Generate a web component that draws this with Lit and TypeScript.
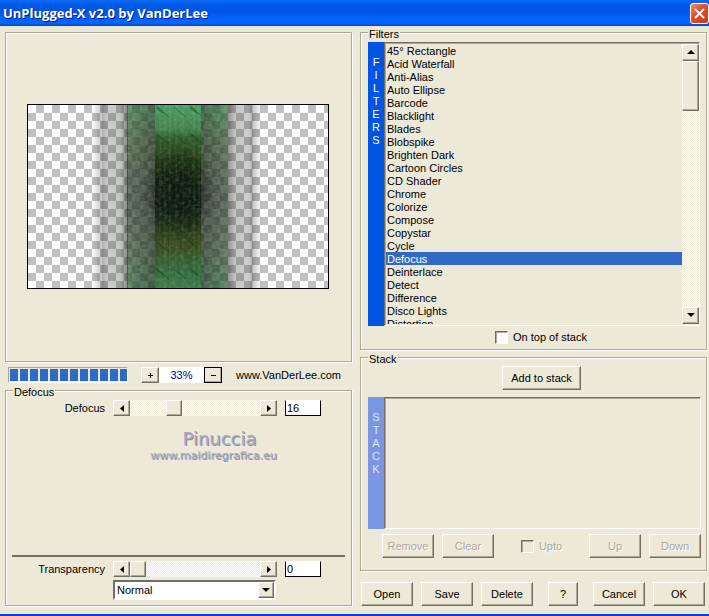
import { LitElement, html, svg, css } from "lit";
import { customElement, property, state } from "lit/decorators.js";
import { classMap } from "lit/directives/class-map.js";

const FILTERS = [
  "45° Rectangle", "Acid Waterfall", "Anti-Alias", "Auto Ellipse", "Barcode",
  "Blacklight", "Blades", "Blobspike", "Brighten Dark", "Cartoon Circles",
  "CD Shader", "Chrome", "Colorize", "Compose", "Copystar", "Cycle", "Defocus",
  "Deinterlace", "Detect", "Difference", "Disco Lights", "Distortion",
];

const controls = css`
  * { box-sizing: border-box; }
  button {
    font: inherit;
    color: #000;
    margin: 0;
    padding: 0;
    border: 1px solid;
    border-color: #fff #716f64 #716f64 #fff;
    border-radius: 0;
    background: #ece9d8;
    box-shadow: inset -1px -1px #aca899;
    display: flex;
    align-items: center;
    justify-content: center;
  }
  button:disabled { color: #aca899; text-shadow: 1px 1px #fff; }
  button svg { display: block; fill: #000; }
  .dither {
    background: repeating-conic-gradient(#fff 0 25%, #ece9d8 0 50%) 0 0 / 2px 2px;
  }
`;

const arrow = {
  left: svg`<path d="M6 1V8L2 4.5z"/>`,
  right: svg`<path d="M2 1V8L6 4.5z"/>`,
  up: svg`<path d="M0 6H8L4 2z"/>`,
  down: svg`<path d="M0 2H8L4 6z"/>`,
};
const icon = (name: keyof typeof arrow) =>
  html`<svg width="8" height="9" viewBox="0 0 8 9" aria-hidden="true">${arrow[name]}</svg>`;

@customElement("param-slider")
class ParamSlider extends LitElement {
  @property() label = "";
  @property({ type: Number }) value = 0;
  @property({ type: Number }) max = 100;

  static styles = [controls, css`
    :host {
      display: grid;
      grid-template-columns: 93px minmax(0, 1fr) 60px;
      column-gap: 8px;
      height: 16px;
      line-height: 16px;
    }
    label { text-align: right; }
    .bar { display: grid; grid-template-columns: 17px 1fr 17px; }
    .range {
      appearance: none;
      width: 100%;
      height: 16px;
      margin: 0;
    }
    .range::-webkit-slider-thumb {
      appearance: none;
      width: 16px;
      height: 16px;
      border: 1px solid;
      border-color: #fff #716f64 #716f64 #fff;
      background: #ece9d8;
      box-shadow: inset -1px -1px #aca899;
    }
    .number {
      width: 36px;
      height: 16px;
      padding: 0 1px;
      font: inherit;
      border: 1px solid #000;
      border-top-color: #fff;
      border-radius: 0;
      background: #fff;
    }
  `];

  private set(v: number) {
    this.value = Math.max(0, Math.min(this.max, v || 0));
  }

  render() {
    return html`
      <label for="range">${this.label}</label>
      <div class="bar">
        <button aria-label="Decrease" @click=${() => this.set(this.value - 1)}>${icon("left")}</button>
        <input id="range" class="range dither" type="range" min="0" max=${this.max}
          .value=${String(this.value)}
          @input=${(e: Event) => this.set(+(e.target as HTMLInputElement).value)}>
        <button aria-label="Increase" @click=${() => this.set(this.value + 1)}>${icon("right")}</button>
      </div>
      <input class="number" type="text" aria-label="${this.label} value" .value=${String(this.value)}
        @change=${(e: Event) => this.set(+(e.target as HTMLInputElement).value)}>
    `;
  }
}

@customElement("preview-image")
class PreviewImage extends LitElement {
  static styles = css`
    :host { display: block; border: 1px solid #000; }
    svg { display: block; width: 100%; height: auto; }
  `;

  render() {
    return html`
      <svg viewBox="0 0 300 183" role="img" aria-label="Filter preview">
        <defs>
          <pattern id="check" width="16" height="16" patternUnits="userSpaceOnUse">
            <path fill="#fff" d="M0 0H16V16H0z"/>
            <path fill="#c0c0c0" d="M8 0H16V8H8zM0 8H8V16H0z"/>
          </pattern>
          <linearGradient id="fadeL">
            <stop offset="0" stop-color="#000" stop-opacity="0"/>
            <stop offset="1" stop-color="#000" stop-opacity=".22"/>
          </linearGradient>
          <linearGradient id="strip">
            <stop offset="0" stop-color="#000" stop-opacity=".3"/>
            <stop offset=".25" stop-color="#50584e" stop-opacity=".3"/>
            <stop offset=".7" stop-color="#50584e" stop-opacity=".34"/>
            <stop offset="1" stop-color="#000" stop-opacity=".5"/>
          </linearGradient>
          <linearGradient id="stripR">
            <stop offset="0" stop-color="#000" stop-opacity=".42"/>
            <stop offset=".3" stop-color="#50584e" stop-opacity=".34"/>
            <stop offset=".8" stop-color="#50584e" stop-opacity=".28"/>
            <stop offset="1" stop-color="#000" stop-opacity=".32"/>
          </linearGradient>
          <linearGradient id="core" x2="0" y2="1">
            <stop offset="0" stop-color="#4c9c65"/>
            <stop offset=".13" stop-color="#408250"/>
            <stop offset=".19" stop-color="#2d562b"/>
            <stop offset=".28" stop-color="#28421b"/>
            <stop offset=".38" stop-color="#182a16"/>
            <stop offset=".56" stop-color="#0f1f16"/>
            <stop offset=".66" stop-color="#213418"/>
            <stop offset=".78" stop-color="#3a4c1e"/>
            <stop offset=".86" stop-color="#326038"/>
            <stop offset="1" stop-color="#387a4b"/>
          </linearGradient>
          <linearGradient id="side" x2="0" y2="1">
            <stop offset="0" stop-color="#22703a"/>
            <stop offset=".2" stop-color="#2c4a28"/>
            <stop offset=".5" stop-color="#223428"/>
            <stop offset=".8" stop-color="#304a30"/>
            <stop offset="1" stop-color="#1c5c34"/>
          </linearGradient>
          <linearGradient id="sideShade">
            <stop offset="0" stop-color="#000" stop-opacity=".02"/>
            <stop offset="1" stop-color="#000" stop-opacity=".28"/>
          </linearGradient>
          <radialGradient id="dark">
            <stop offset="0" stop-color="#06110c" stop-opacity=".8"/>
            <stop offset=".5" stop-color="#0a140c" stop-opacity=".5"/>
            <stop offset="1" stop-color="#0a140c" stop-opacity="0"/>
          </radialGradient>
          <filter id="grain" x="0" y="0" width="1" height="1">
            <feTurbulence type="fractalNoise" baseFrequency=".25 .3" numOctaves="2" seed="4"/>
            <feColorMatrix values="0 0 0 0 .5  0 0 0 0 .56  0 0 0 0 .24  1.6 0 0 0 -.66"/>
          </filter>
          <pattern id="teeth" width="34" height="27" patternUnits="userSpaceOnUse" patternTransform="translate(127 0)">
            <path d="M2 2L14 12M19 2L31 12" stroke="#10301c" stroke-opacity=".45"/>
            <path d="M0 0L6 4L10 10L2 5zM34 0L40 4z" fill="#10301c" fill-opacity=".3"/>
            <path d="M5 0V27M10 0V27M15 0V27M21 0V27M28 0V27" stroke="#bfe8c0" stroke-opacity=".08"/>
          </pattern>
        </defs>
        <rect width="300" height="183" fill="url(#check)"/>
        <rect x="64" width="10" height="183" fill="url(#fadeL)"/>
        <rect x="74" width="26" height="183" fill="url(#strip)"/>
        <rect x="200" width="25" height="183" fill="url(#stripR)"/>
        <rect x="-234" width="9" height="183" transform="scale(-1 1)" fill="url(#fadeL)"/>
        <rect x="99" width="101" height="183" fill="url(#side)" fill-opacity=".7"/>
        <rect x="99" width="28" height="183" fill="url(#sideShade)"/>
        <rect x="-200" width="27" height="183" transform="scale(-1 1)" fill="url(#sideShade)"/>
        <rect x="127" width="46" height="183" fill="url(#core)"/>
        <ellipse cx="151" cy="86" rx="36" ry="46" fill="url(#dark)"/>
        <rect x="99" width="101" height="183" filter="url(#grain)" opacity=".3"/>
        <rect x="127" width="46" height="183" fill="url(#teeth)"/>
        <g fill="none" stroke="#77813a" stroke-opacity=".3" stroke-dasharray="1 2">
          <ellipse cx="151" cy="88" rx="10" ry="12"/>
          <ellipse cx="151" cy="88" rx="16" ry="22"/>
          <ellipse cx="151" cy="88" rx="21" ry="32"/>
          <path d="M130 136H172M130 140H172M130 64H160"/>
        </g>
      </svg>
    `;
  }
}

@customElement("app-root")
class AppRoot extends LitElement {
  @state() private selected = "Defocus";
  @state() private zoom = 33;

  static styles = [controls, css`
    :host {
      display: flex;
      flex-direction: column;
      min-height: 100vh;
      box-sizing: border-box;
      border-bottom: 2px solid #0842d8;
      background: #ece9d8;
      color: #000;
      font: 11px/13px "Liberation Sans", Arial, sans-serif;
    }
    .title {
      display: flex;
      align-items: center;
      justify-content: space-between;
      height: 26px;
      padding-left: 3px;
      background: linear-gradient(#0a6af5 0, #0058e6 20%, #0055e5 45%, #0066ff 75%, #0062f8 90%, #0046c4);
      color: #fff;
    }
    h1 {
      margin: 0;
      font: bold 13px/24px "Open Sans", sans-serif;
      text-shadow: 1px 1px #0a1883;
    }
    .close {
      width: 19px;
      height: 21px;
      border: 1px solid #fff;
      border-radius: 3px;
      background: linear-gradient(135deg, #f0906f, #e0502c 40%, #c83a14);
      box-shadow: none;
    }
    .close svg { stroke: #fff; stroke-width: 2; }
    main {
      flex: 1;
      display: grid;
      grid-template-columns: 1fr 1fr;
      column-gap: 8px;
      padding: 6px 2px 8px 5px;
    }
    .col { display: flex; flex-direction: column; min-width: 0; }
    .etched, fieldset {
      border: 1px solid #aca899;
      box-shadow: 1px 1px #fff, inset 1px 1px #fff;
    }
    .preview {
      flex: 1;
      display: flex;
      align-items: center;
      justify-content: center;
      padding: 21px 22px 22px 21px;
    }
    preview-image { width: 100%; }
    fieldset {
      position: relative;
      display: flex;
      flex-direction: column;
      min-width: 0;
      margin: 0;
      padding: 9px 6px 5px;
    }
    legend {
      position: absolute;
      top: -5px;
      left: 7px;
      padding: 0 1px;
      background: #ece9d8;
    }
    .status {
      display: flex;
      align-items: center;
      height: 16px;
      margin: 5px 0 7px;
      padding: 0 11px 0 3px;
    }
    .progress {
      display: flex;
      gap: 2px;
      width: 120px;
      padding: 1px;
      overflow: hidden;
      border: 1px solid;
      border-color: #aca899 #fff #fff #aca899;
    }
    .progress i { flex: none; width: 8px; height: 12px; background: #316ac5; }
    .zoom { display: flex; height: 16px; margin: 0 auto 0 13px; line-height: 16px; }
    .zoom button { width: 18px; }
    .zoom .default { outline: 1px solid #000; outline-offset: -1px; }
    .zoom output { width: 45px; background: #fff; color: #000080; text-align: center; }
    .status a { color: #000; text-decoration: none; }
    .mark {
      min-height: 126px;
      margin: 13px 0 0 70px;
      text-align: center;
      color: #a9a9c8;
      text-shadow: 1px 1px #8f8f94;
      font: 11px/14px "DejaVu Sans", sans-serif;
    }
    .mark b { display: block; padding-left: 12px; font: 18px/20px "DejaVu Sans", sans-serif; }
    hr { width: 100%; height: 2px; margin: 0 0 4px; border: 0; background: #716f64; }
    .mode { position: relative; margin: 3px 69px 0 101px; }
    .mode select {
      display: block;
      appearance: none;
      width: 100%;
      height: 20px;
      padding: 0 2px;
      font: inherit;
      color: #000;
      background: #fff;
      border: 2px solid;
      border-color: #716f64 #fff #fff #716f64;
      border-radius: 0;
    }
    .drop {
      position: absolute;
      top: 2px;
      right: 2px;
      width: 16px;
      height: 16px;
      display: flex;
      align-items: center;
      justify-content: center;
      border: 1px solid;
      border-color: #fff #716f64 #716f64 #fff;
      background: #ece9d8;
      box-shadow: inset -1px -1px #aca899;
      pointer-events: none;
    }
    .filters { flex: 1; padding: 9px 6px 5px 7px; }
    .filters .tick { padding-left: 14px; }
    .stack { margin: 7px 0 11px; padding: 8px 5px 12px 7px; }
    .stack .add { display: flex; justify-content: center; padding-left: 14px; }
    .boxed { display: flex; }
    .filters .boxed { flex: 1; margin-bottom: 5px; }
    .stack .boxed { height: 132px; margin: 7px 0 5px; }
    .tag {
      width: 16px;
      padding: 14px 2px;
      background: #0054e3;
      color: #fff;
      text-align: center;
    }
    .tag.off { background: #7b96e1; color: #dfe5f5; }
    .tag span { display: block; }
    .well {
      flex: 1;
      display: flex;
      min-width: 0;
      border: 1px solid;
      border-color: #716f64 #fff #fff #716f64;
      box-shadow: inset 1px 1px #aca899;
      padding: 1px 0 1px 1px;
    }
    ul {
      flex: 1;
      height: 0;
      min-height: 100%;
      margin: 0;
      padding: 0;
      overflow: hidden;
      list-style: none;
    }
    li { padding: 1px 0 0 1px; line-height: 12px; }
    li.on { background: #316ac5; color: #fff; }
    .scroll { width: 17px; display: flex; flex-direction: column; justify-content: space-between; }
    .scroll button { height: 17px; }
    .thumb {
      height: 50px;
      margin-bottom: auto;
      border: 1px solid;
      border-color: #fff #716f64 #716f64 #fff;
      background: #ece9d8;
      box-shadow: inset -1px -1px #aca899;
    }
    .tick { display: flex; align-items: center; justify-content: center; gap: 5px; }
    .tick.off { color: #aca899; text-shadow: 1px 1px #fff; }
    .tick input {
      appearance: none;
      width: 13px;
      height: 13px;
      margin: 0;
      background: #fff;
      border: 1px solid;
      border-color: #716f64 #fff #fff #716f64;
      box-shadow: inset 1px 1px #aca899;
    }
    .tick input:disabled { background: #ece9d8; }
    .push { width: 52px; height: 24px; }
    .push.wide { width: 79px; }
    .push.small { width: 30px; }
    .row { display: flex; gap: 8px; }
    .stack .row { padding-left: 14px; }
    .row .tick { flex: 1; }
    .actions { padding: 0 2px 0 1px; }
    .actions .small { margin: 0 auto; }
  `];

  render() {
    return html`
      <header class="title">
        <h1>UnPlugged-X v2.0 by VanDerLee</h1>
        <button class="close" aria-label="Close">
          <svg width="13" height="13" viewBox="0 0 13 13"><path d="M2 2L11 11M11 2L2 11"/></svg>
        </button>
      </header>
      <main>
        <div class="col">
          <section class="preview etched"><preview-image></preview-image></section>
          <div class="status">
            <div class="progress" role="progressbar" aria-label="Render progress" aria-valuenow="100">
              ${Array.from({ length: 12 }, () => html`<i></i>`)}
            </div>
            <div class="zoom">
              <button aria-label="Zoom in" @click=${() => this.zoom++}>
                <svg width="7" height="7" viewBox="0 0 7 7"><path d="M3 1H4V3H6V4H4V6H3V4H1V3H3z"/></svg>
              </button>
              <output>${this.zoom}%</output>
              <button class="default" aria-label="Zoom out" @click=${() => this.zoom--}>
                <svg width="7" height="7" viewBox="0 0 7 7"><path d="M1 3H6V4H1z"/></svg>
              </button>
            </div>
            <a href="#vanderlee">www.VanDerLee.com</a>
          </div>
          <fieldset>
            <legend>${this.selected}</legend>
            <param-slider label="Defocus" .value=${16} .max=${51}></param-slider>
            <div class="mark"><b>Pinuccia</b>www.maidiregrafica.eu</div>
            <hr>
            <param-slider label="Transparency" .value=${0} .max=${100}></param-slider>
            <div class="mode">
              <select aria-label="Blend mode"><option>Normal</option></select>
              <span class="drop">${icon("down")}</span>
            </div>
          </fieldset>
        </div>
        <div class="col">
          <fieldset class="filters">
            <legend>Filters</legend>
            <div class="boxed">
              <div class="tag">${[..."FILTERS"].map((c) => html`<span>${c}</span>`)}</div>
              <div class="well">
                <ul role="listbox" aria-label="Filters">
                  ${FILTERS.map((name) => html`
                    <li role="option" class=${classMap({ on: name === this.selected })}
                      aria-selected=${name === this.selected}
                      @click=${() => (this.selected = name)}>${name}</li>`)}
                </ul>
                <div class="scroll dither">
                  <button aria-label="Scroll up">${icon("up")}</button>
                  <div class="thumb"></div>
                  <button aria-label="Scroll down">${icon("down")}</button>
                </div>
              </div>
            </div>
            <label class="tick"><input type="checkbox">On top of stack</label>
          </fieldset>
          <fieldset class="stack">
            <legend>Stack</legend>
            <div class="add"><button class="push wide">Add to stack</button></div>
            <div class="boxed">
              <div class="tag off">${[..."STACK"].map((c) => html`<span>${c}</span>`)}</div>
              <div class="well"></div>
            </div>
            <div class="row">
              <button class="push" disabled>Remove</button>
              <button class="push" disabled>Clear</button>
              <label class="tick off"><input type="checkbox" disabled>Upto</label>
              <button class="push" disabled>Up</button>
              <button class="push" disabled>Down</button>
            </div>
          </fieldset>
          <div class="row actions">
            <button class="push">Open</button>
            <button class="push">Save</button>
            <button class="push">Delete</button>
            <button class="push small">?</button>
            <button class="push">Cancel</button>
            <button class="push">OK</button>
          </div>
        </div>
      </main>
    `;
  }
}
